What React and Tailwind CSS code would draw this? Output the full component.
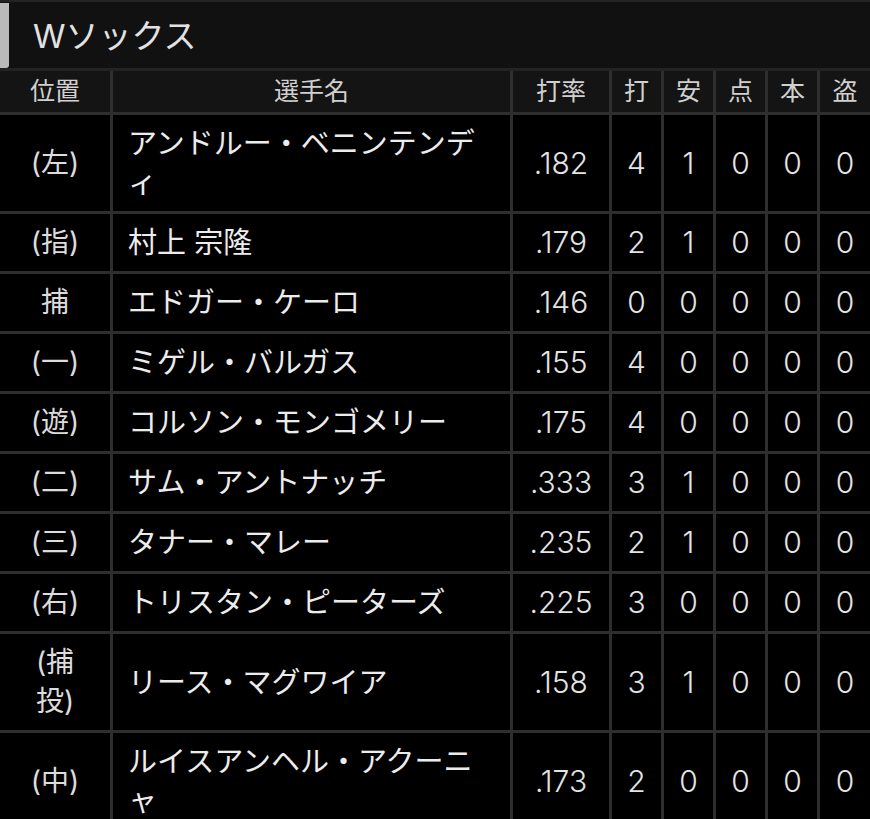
import React from "react";

const rows = [
  { pos: "(左)", name: "アンドルー・ベニンテンディ", avg: ".182", ab: 4, h: 1, r: 0, hr: 0, sb: 0 },
  { pos: "(指)", name: "村上 宗隆", avg: ".179", ab: 2, h: 1, r: 0, hr: 0, sb: 0 },
  { pos: "捕", name: "エドガー・ケーロ", avg: ".146", ab: 0, h: 0, r: 0, hr: 0, sb: 0 },
  { pos: "(一)", name: "ミゲル・バルガス", avg: ".155", ab: 4, h: 0, r: 0, hr: 0, sb: 0 },
  { pos: "(遊)", name: "コルソン・モンゴメリー", avg: ".175", ab: 4, h: 0, r: 0, hr: 0, sb: 0 },
  { pos: "(二)", name: "サム・アントナッチ", avg: ".333", ab: 3, h: 1, r: 0, hr: 0, sb: 0 },
  { pos: "(三)", name: "タナー・マレー", avg: ".235", ab: 2, h: 1, r: 0, hr: 0, sb: 0 },
  { pos: "(右)", name: "トリスタン・ピーターズ", avg: ".225", ab: 3, h: 0, r: 0, hr: 0, sb: 0 },
  { pos: ["(捕", "投)"], name: "リース・マグワイア", avg: ".158", ab: 3, h: 1, r: 0, hr: 0, sb: 0 },
  { pos: "(中)", name: "ルイスアンヘル・アクーニャ", avg: ".173", ab: 2, h: 0, r: 0, hr: 0, sb: 0 },
];

const headers = ["位置", "選手名", "打率", "打", "安", "点", "本", "盗"];

const font = { fontFamily: 'Inter, "Noto Sans CJK JP", sans-serif' };

export default function App() {
  return (
    <div className="w-[870px] h-[819px] overflow-hidden bg-black" style={font}>
      <div className="border-t-2 border-b-[3px] border-[#232323] bg-[#111111] h-[71px] flex items-stretch">
        <div className="w-[9px] bg-[#bababa] mt-px rounded-br-[3px]" />
        <div className="flex items-center pl-[24px] text-[33px] text-[#e2e2e2] leading-none pt-[3px]">
          Wソックス
        </div>
      </div>
      <div className="grid grid-cols-[110px_397px_96px_49px_49px_49px_49px_1fr] gap-[3px] bg-[#2e2e2e]">
        {headers.map((h) => (
          <div
            key={h}
            className="bg-[#141414] h-[41px] flex items-center justify-center text-[25px] text-[#d0d0d0] leading-none"
          >
            {h}
          </div>
        ))}
        {rows.map((r, idx) => (
          <React.Fragment key={idx}>
            <div className="bg-black flex items-center justify-center text-center text-[28px] leading-[39px] text-[#dcdcdc] py-[9px]">
              {Array.isArray(r.pos) ? (
                <span>
                  {r.pos[0]}
                  <br />
                  {r.pos[1]}
                </span>
              ) : (
                r.pos
              )}
            </div>
            <div className="bg-black flex items-center pl-[15px] pr-[20px] text-[29px] leading-[39px] text-[#ececec] py-[9px]">
              <span>{r.name}</span>
            </div>
            {[r.avg, r.ab, r.h, r.r, r.hr, r.sb].map((v, j) => (
              <div
                key={j}
                className="bg-black flex items-center justify-center text-[30px] font-light leading-[39px] text-[#e4e4e4] py-[9px]"
              >
                {v}
              </div>
            ))}
          </React.Fragment>
        ))}
      </div>
    </div>
  );
}
